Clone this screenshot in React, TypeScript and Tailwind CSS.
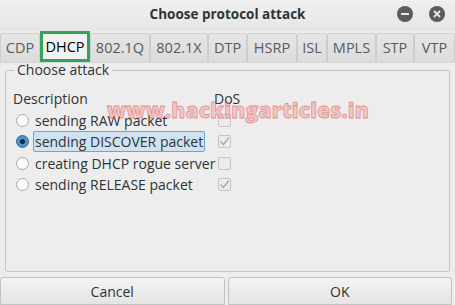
const tabs = [
  { label: "CDP", w: "w-[40px]" },
  { label: "DHCP", w: "w-[50px]", active: true },
  { label: "802.1Q", w: "w-[60px]" },
  { label: "802.1X", w: "w-[58px]" },
  { label: "DTP", w: "w-[39px]" },
  { label: "HSRP", w: "w-[50px]" },
  { label: "ISL", w: "w-[30px]" },
  { label: "MPLS", w: "w-[49px]" },
  { label: "STP", w: "w-[38px]" },
  { label: "VTP", w: "w-[41px]" },
]

const attacks = [
  { label: "sending RAW packet", dos: false },
  { label: "sending DISCOVER packet", dos: true, selected: true },
  { label: "creating DHCP rogue server", dos: false },
  { label: "sending RELEASE packet", dos: true },
]

function Radio({ on }: { on?: boolean }) {
  return (
    <div
      className={
        on
          ? "w-[13px] h-[13px] rounded-full border border-[#2f6d9c] bg-[#4d94cc] flex items-center justify-center"
          : "w-[13px] h-[13px] rounded-full border border-[#a8a8a8] bg-[#fafafa]"
      }
    >
      {on && <div className="w-[5px] h-[5px] rounded-full bg-[#13293d]" />}
    </div>
  )
}

function Check({ on }: { on: boolean }) {
  return (
    <div className="w-[13px] h-[13px] rounded-[2px] border border-[#c4c4c4] bg-[#ececec] flex items-center justify-center">
      {on && (
        <svg width="11" height="11" viewBox="0 0 11 11">
          <path d="M1.5 5.5 L4.3 8.5 L9.8 1.8" fill="none" stroke="#a5a5a5" strokeWidth="1.4" />
        </svg>
      )}
    </div>
  )
}

export default function App() {
  return (
    <div className="w-[455px] h-[305px] bg-[#ededed] flex flex-col overflow-hidden text-[#2e3436]" style={{ fontFamily: '"Open Sans", sans-serif' }}>
      {/* title bar */}
      <div className="relative h-[31px] shrink-0 bg-gradient-to-b from-[#f0f0f0] to-[#e6e6e6] flex items-center justify-center pb-[3px]">
        <span className="text-[13.5px] font-bold text-[#2e3436]">Choose protocol attack</span>
        <div className="absolute right-[10px] top-[6px] flex gap-[16px]">
          <div className="w-[16px] h-[16px] rounded-full bg-[#5c5c5c] flex items-center justify-center">
            <div className="w-[8px] h-[2px] bg-[#e8e8e8]" />
          </div>
          <div className="w-[16px] h-[16px] rounded-full bg-[#5c5c5c] flex items-center justify-center">
            <svg width="8" height="8" viewBox="0 0 8 8">
              <path d="M1 1 L7 7 M7 1 L1 7" stroke="#e8e8e8" strokeWidth="1.8" />
            </svg>
          </div>
        </div>
      </div>

      {/* tabs */}
      <div className="h-[31px] shrink-0 flex items-end">
        {tabs.map((t) =>
          t.active ? (
            <div key={t.label} className={`${t.w} h-[31px] border-[3px] border-[#34a35a] bg-[#f2f2f2] flex items-center justify-center text-[14.5px] text-black`}>
              {t.label}
            </div>
          ) : (
            <div key={t.label} className={`${t.w} h-[29px] border border-[#cdcdcd] border-b-0 rounded-t-[3px] bg-gradient-to-b from-[#e6e6e6] to-[#dcdcdc] flex items-center justify-center text-[14.5px] text-[#5a5a5a]`}>
              {t.label}
            </div>
          )
        )}
      </div>

      {/* panel */}
      <div className="relative flex-1 border-t border-[#d6d6d6] bg-[#ededed] px-[5px] pb-[3px]">
        <fieldset className="h-full border border-[#c6c6c6] rounded-[2px] px-[7px] m-0 -mt-[2px]">
          <legend className="text-[14px] leading-[18px] px-[3px] ml-[1px] text-[#2e3436]">Choose attack</legend>
          <div className="grid grid-cols-[201px_1fr] mt-[9px] text-[14px] leading-[21.5px]">
            <div>Description</div>
            <div>DoS</div>
            {attacks.map((a) => (
              <div key={a.label} className="contents">
                <div className="flex items-center gap-[6px] h-[21.5px] whitespace-nowrap">
                  <div className="ml-[3px] shrink-0">
                    <Radio on={a.selected} />
                  </div>
                  <span
                    className={
                      a.selected
                        ? "bg-[#cfe2f2] border border-[#6aa6d3] rounded-[2px] px-[1px] leading-[19px] -ml-[2px]"
                        : ""
                    }
                  >
                    {a.label}
                  </span>
                </div>
                <div className="flex items-center h-[21.5px] pl-[4px]">
                  <Check on={a.dos} />
                </div>
              </div>
            ))}
          </div>
        </fieldset>
        {/* watermark */}
        <div
          className="absolute left-[107px] top-[32px] text-[21px] font-extrabold tracking-[0.2px] text-[#f4a0a0] opacity-50 pointer-events-none"
          style={{ WebkitTextStroke: "0.8px #d33" }}
        >
          www.hackingarticles.in
        </div>
      </div>

      {/* buttons */}
      <div className="h-[28px] shrink-0 flex gap-[3px] pr-[3px]">
        <button className="flex-1 border border-[#c2c2c2] rounded-t-[3px] bg-gradient-to-b from-[#f3f3f3] to-[#e4e4e4] text-[14px] text-[#2e3436]">Cancel</button>
        <button className="flex-1 border border-[#c2c2c2] rounded-t-[3px] bg-gradient-to-b from-[#f3f3f3] to-[#e4e4e4] text-[14px] text-[#2e3436]">OK</button>
      </div>
    </div>
  )
}
